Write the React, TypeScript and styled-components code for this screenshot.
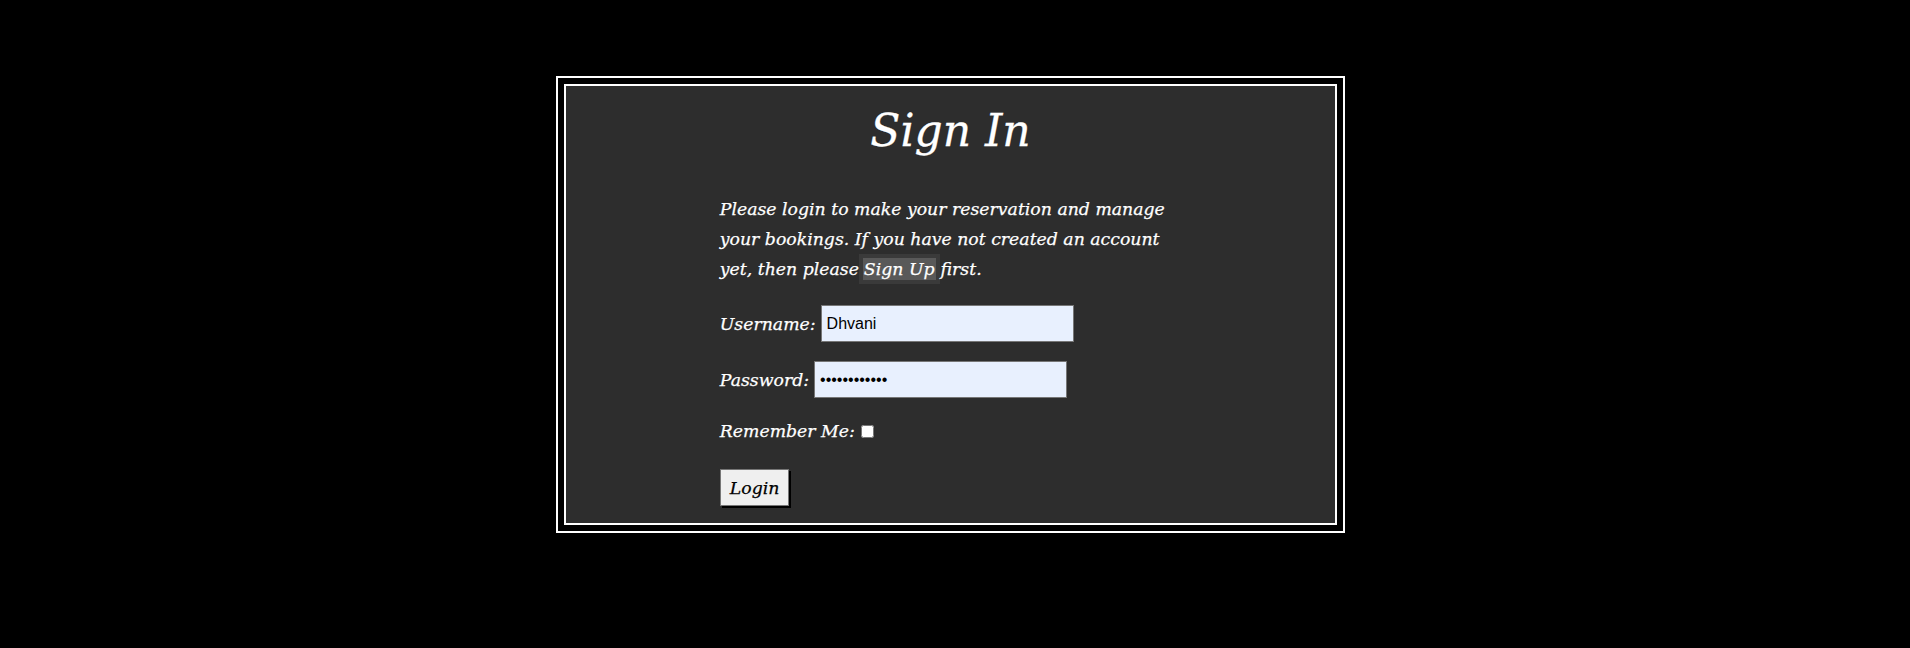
import React from 'react';
import styled, { createGlobalStyle } from 'styled-components';

const GlobalStyle = createGlobalStyle`
  html,
  body {
    margin: 0;
    background-color: #000;
  }
`;

const Page = styled.div`
  padding: 76px 9px 0 0;
  min-height: 648px;
  box-sizing: border-box;
  font-family: 'DejaVu Serif', 'Liberation Serif', serif;
  font-style: italic;
  color: #fff;
`;

const OuterFrame = styled.div`
  width: 773px;
  margin: 0 auto;
  padding: 6px;
  border: 2px solid #fff;
  background-color: #000;
`;

const Panel = styled.section`
  height: 437px;
  border: 2px solid #fff;
  background-color: #2d2d2d;
  box-sizing: content-box;
`;

const Title = styled.h1`
  margin: 0;
  padding-top: 19px;
  font-size: 44px;
  line-height: 52px;
  font-weight: normal;
  text-align: center;
  -webkit-text-stroke: 0.3px #fff;
`;

const Content = styled.div`
  width: 60%;
  margin: 0 auto;
  font-size: 17.3px;
  -webkit-text-stroke: 0.25px currentColor;
`;

const Intro = styled.p`
  margin: 37px 0 0;
  line-height: 30px;
`;

const SignUpLink = styled.a`
  margin: 0 5px 0 4px;
  padding: 1px;
  background-color: #595959;
  box-shadow: 0 0 0 4px #3a3a3a;
  color: #fff;
  text-decoration: none;
`;

const Field = styled.div<{ $space: number }>`
  display: flex;
  align-items: center;
  gap: 5px;
  margin-top: ${(p) => p.$space}px;
`;

const Label = styled.label`
  line-height: normal;
`;

const TextInput = styled.input`
  width: 253px;
  height: 37px;
  box-sizing: border-box;
  padding: 0 5px;
  border: 1px solid #767676;
  background-color: #e8f0fe;
  color: #000;
  font-family: 'Liberation Sans', Arial, sans-serif;
  font-style: normal;
  font-size: 16px;
  -webkit-text-stroke: 0;
  outline: none;
`;

const Checkbox = styled.input`
  width: 13px;
  height: 13px;
  margin: 0 0 0 1px;
`;

const ButtonRow = styled.div`
  margin-top: 28px;
`;

const LoginButton = styled.button`
  height: 37px;
  padding: 0 9px;
  border: 1px solid #767676;
  background-color: #efefef;
  box-shadow: 2px 2px 0 #000;
  color: #000;
  font-family: 'DejaVu Serif', 'Liberation Serif', serif;
  font-style: italic;
  font-size: 17.3px;
  -webkit-text-stroke: 0.25px #000;
  cursor: pointer;
`;

const App: React.FC = () => {
    return (
        <>
            <GlobalStyle />
            <Page>
                <OuterFrame>
                    <Panel>
                        <Title>Sign In</Title>
                        <Content>
                            <Intro>
                                Please login to make your reservation and manage your bookings. If you
                                have not created an account yet, then please
                                <SignUpLink href="#signup">Sign Up</SignUpLink>
                                first.
                            </Intro>
                            <Field $space={21}>
                                <Label htmlFor="username">Username:</Label>
                                <TextInput id="username" type="text" defaultValue="Dhvani" />
                            </Field>
                            <Field $space={19}>
                                <Label htmlFor="password">Password:</Label>
                                <TextInput id="password" type="password" defaultValue="dhvani123456" />
                            </Field>
                            <Field $space={23}>
                                <Label htmlFor="remember">Remember Me:</Label>
                                <Checkbox id="remember" type="checkbox" />
                            </Field>
                            <ButtonRow>
                                <LoginButton type="submit">Login</LoginButton>
                            </ButtonRow>
                        </Content>
                    </Panel>
                </OuterFrame>
            </Page>
        </>
    );
};

export default App;
